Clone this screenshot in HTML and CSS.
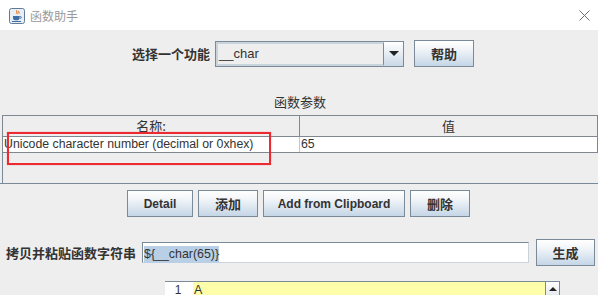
FILE: index.html
```html
<!DOCTYPE html>
<html>
<head>
<meta charset="utf-8">
<link rel="stylesheet" href="styles.css">
</head>
<body>
<div class="window">
  <div class="titlebar">
    <svg class="app-icon" width="16" height="16" viewBox="0 0 16 16">
      <rect x="0.5" y="0.5" width="15" height="15" rx="2" fill="#e9eef4" stroke="#5f7b99"/>
      <path d="M8 2.5c-1.5 1.2 1.2 2.2-0.3 3.6M10 3.2c-1 0.8 0.8 1.5-0.2 2.4" stroke="#e36f1e" stroke-width="1.1" fill="none"/>
      <path d="M4 8h6.5v2.2c0 1.3-1 2-2 2H6c-1 0-2-0.7-2-2z" fill="#3e6ea5"/>
      <path d="M10.5 8.6h1.2c0.8 0 0.8 1.6 0 1.6h-1.2" stroke="#3e6ea5" fill="none"/>
      <rect x="3" y="13" width="9" height="1" fill="#3e6ea5"/>
    </svg>
    <span class="title">函数助手</span>
    <svg class="close" width="11" height="11" viewBox="0 0 11 11">
      <path d="M0.5 0.5L10.5 10.5M10.5 0.5L0.5 10.5" stroke="#6f6f6f" stroke-width="1"/>
    </svg>
  </div>
  <div class="main">
    <div class="func-row">
      <span class="label">选择一个功能</span>
      <div class="combo">
        <div class="combo-field">__char</div>
        <div class="combo-btn"><span class="arrow-down"></span></div>
      </div>
      <button class="btn btn-help">帮助</button>
    </div>
    <div class="section-title">函数参数</div>
    <div class="table-section">
      <div class="table-pane">
        <div class="table">
          <div class="thead">
            <div class="th col-name">名称:</div>
            <div class="th col-value">值</div>
          </div>
          <div class="trow">
            <div class="td col-name">Unicode character number (decimal or 0xhex)</div>
            <div class="td col-value">65</div>
          </div>
        </div>
      </div>
      <div class="highlight-box"></div>
    </div>
    <div class="btn-row">
      <button class="btn btn-detail">Detail</button>
      <button class="btn btn-add">添加</button>
      <button class="btn btn-clip">Add from Clipboard</button>
      <button class="btn btn-del">删除</button>
    </div>
    <div class="copy-row">
      <span class="label">拷贝并粘贴函数字符串</span>
      <div class="copy-field"><span class="selected">${__char(65)}</span></div>
      <button class="btn btn-gen">生成</button>
    </div>
    <div class="result-area">
      <div class="gutter">1</div>
      <div class="result-line">A</div>
      <div class="vscroll"><span class="arrow-up"></span></div>
    </div>
  </div>
</div>
</body>
</html>
```
FILE: styles.css
```css
* { box-sizing: border-box; }
html, body {
  margin: 0;
  padding: 0;
  width: 598px;
  height: 295px;
  overflow: hidden;
  background: #eeeeee;
}
.window {
  width: 598px;
  height: 295px;
  font-family: "Liberation Sans", "Noto Sans CJK SC", sans-serif;
  color: #333333;
}
.titlebar {
  height: 30px;
  background: #ffffff;
  display: flex;
  align-items: center;
  padding-left: 9px;
  padding-right: 8px;
}
.app-icon { flex: none; margin-top: 2px; }
.title {
  margin-left: 5px;
  font-family: "Noto Sans CJK SC", sans-serif;
  font-size: 12px;
  color: #9a9a9a;
  flex: 1;
}
.close { flex: none; }
.main {
  background: #eeeeee;
  height: 265px;
}
.label {
  font-family: "Noto Sans CJK SC", sans-serif;
  font-weight: bold;
  font-size: 13px;
  color: #333333;
}
.func-row {
  display: flex;
  align-items: center;
  padding-left: 132px;
  padding-top: 10px;
  height: 37px;
}
.func-row .label { width: 83px; }
.combo {
  display: flex;
  width: 189px;
  height: 26px;
  border: 1px solid #7a8a99;
}
.combo-field {
  flex: 1;
  border: 2px solid #c9d3dc;
  border-right: 1px solid #7a8a99;
  background: #eeeeee;
  font-size: 13px;
  line-height: 20px;
  padding-left: 1px;
  color: #333;
}
.combo-btn {
  width: 19px;
  background: linear-gradient(#ffffff, #c9d8e7);
  display: flex;
  align-items: center;
  justify-content: center;
}
.arrow-down {
  width: 0; height: 0;
  border-left: 5px solid transparent;
  border-right: 5px solid transparent;
  border-top: 5px solid #222;
}
.btn {
  font-family: "Liberation Sans", "Noto Sans CJK SC", sans-serif;
  font-weight: bold;
  font-size: 12px;
  color: #333333;
  border: 1px solid #7a8a99;
  background: linear-gradient(#ffffff 0%, #f3f6f9 30%, #c5d6e7 100%);
  padding: 0;
  margin: 0;
  height: 27px;
}
.btn-help {
  margin-left: 10px;
  width: 60px;
  font-family: "Noto Sans CJK SC", sans-serif;
  font-size: 13px;
}
.section-title {
  font-family: "Noto Sans CJK SC", sans-serif;
  font-size: 13px;
  text-align: center;
  line-height: 16px;
  margin-top: 27px;
  padding-left: 2px;
  height: 21px;
}
.table-section {
  position: relative;
  height: 69px;
  border-bottom: 1px solid #7a8a99;
}
.table-pane {
  margin-left: 2px;
  height: 68px;
  border-left: 1px solid #7a8a99;
}
.table {
  width: 596px;
  margin-left: -1px;
  border: 1px solid #7f8890;
}
.thead {
  display: flex;
  height: 21px;
  border-bottom: 1px solid #7f8890;
  background: #eeeeee;
}
.th {
  text-align: center;
  font-family: "Noto Sans CJK SC", sans-serif;
  font-size: 13px;
  line-height: 20px;
  color: #333;
}
.col-name { width: 297px; border-right: 1px solid #7f8890; }
.col-value { flex: 1; }
.trow {
  display: flex;
  height: 15px;
  background: #ffffff;
}
.td {
  font-size: 12.3px;
  line-height: 15px;
  padding-left: 1px;
  color: #333;
  white-space: nowrap;
}
.trow .col-name { border-right: 1px solid #c8c8c8; }
.highlight-box {
  position: absolute;
  left: 7px;
  top: 17px;
  width: 264px;
  height: 33px;
  border: 2px solid #ec2a30;
  box-shadow: 0 0 1px rgba(236, 42, 48, 0.5);
}
.btn-row {
  display: flex;
  justify-content: center;
  gap: 5px;
  margin-top: 6px;
  padding-right: 1px;
}
.btn-detail { width: 66px; }
.btn-add { width: 60px; font-family: "Noto Sans CJK SC", sans-serif; font-size: 13px; }
.btn-clip { width: 142px; }
.btn-del { width: 60px; font-family: "Noto Sans CJK SC", sans-serif; font-size: 13px; }
.copy-row {
  display: flex;
  align-items: center;
  padding-left: 6px;
  margin-top: 21px;
  height: 28px;
}
.copy-row .label { width: 136px; }
.copy-field {
  width: 387px;
  height: 21px;
  border: 1px solid #7a8a99;
  border-right-color: #c9d3dc;
  border-bottom-color: #c9d3dc;
  background: #ffffff;
  padding-left: 1px;
  padding-top: 1px;
}
.selected {
  display: inline-block;
  background: #b8cfe5;
  font-size: 12.4px;
  line-height: 17px;
  color: #333;
}
.btn-gen {
  margin-left: 7px;
  width: 59px;
  height: 27px;
  font-family: "Noto Sans CJK SC", sans-serif;
  font-size: 13px;
}
.result-area {
  display: flex;
  margin-left: 165px;
  margin-top: 15px;
  width: 395px;
  height: 20px;
  border-top: 1px solid #7a8a99;
}
.gutter {
  width: 28px;
  background: #ffffff;
  text-align: center;
  font-size: 12px;
  line-height: 16px;
  color: #333;
  padding-right: 2px;
}
.result-line {
  flex: 1;
  background: #ffffaa;
  font-size: 12.5px;
  line-height: 16px;
  padding-left: 1px;
  color: #333;
}
.vscroll {
  width: 15px;
  height: 15px;
  border: 1px solid #7a8a99;
  border-top: none;
  background: linear-gradient(#ffffff, #e3e9ef);
  display: flex;
  align-items: center;
  justify-content: center;
}
.arrow-up {
  width: 0; height: 0;
  border-left: 4px solid transparent;
  border-right: 4px solid transparent;
  border-bottom: 4px solid #222;
}
```
